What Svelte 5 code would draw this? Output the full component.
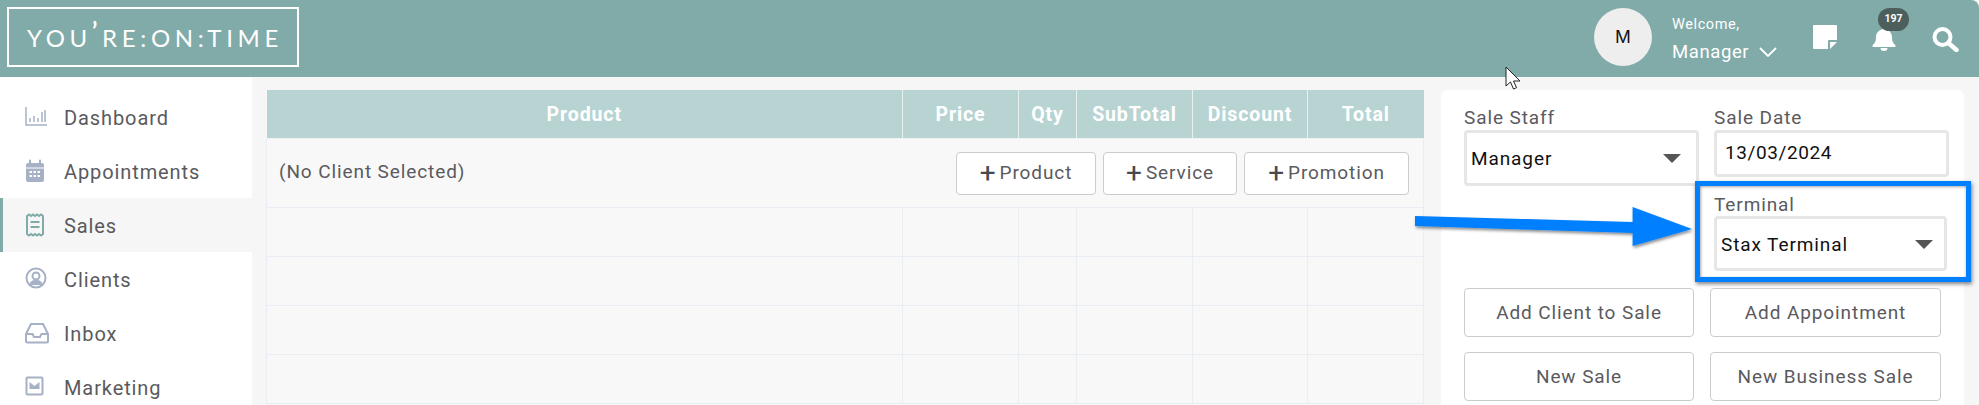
<script>
	const navItems = [
		{ label: 'Dashboard', icon: 'chart' },
		{ label: 'Appointments', icon: 'calendar' },
		{ label: 'Sales', icon: 'receipt', active: true },
		{ label: 'Clients', icon: 'user' },
		{ label: 'Inbox', icon: 'inbox' },
		{ label: 'Marketing', icon: 'mail' }
	];

	const columns = [
		{ label: 'Product', width: 636 },
		{ label: 'Price', width: 116 },
		{ label: 'Qty', width: 58 },
		{ label: 'SubTotal', width: 116 },
		{ label: 'Discount', width: 115 },
		{ label: 'Total', width: 116 }
	];
	const addButtons = [
		{ label: 'Product', width: 140 },
		{ label: 'Service', width: 134 },
		{ label: 'Promotion', width: 165 }
	];
	const actions = ['Add Client to Sale', 'Add Appointment', 'New Sale', 'New Business Sale'];
	const emptyRows = [1, 2, 3, 4];
</script>

<div class="page">
	<header class="topbar">
		<div class="logo"><span>YOU<i>’</i>RE:ON:TIME</span></div>

		<div class="topbar__right">
			<div class="avatar">M</div>
			<div class="welcome">
				<small>Welcome,</small>
				<div class="welcome__name">
					Manager
					<svg width="18" height="10" viewBox="0 0 18 10" fill="none" stroke="#fff" stroke-width="1.8"><path d="M1 1l8 8 8-8" /></svg>
				</div>
			</div>
			<svg class="note" width="24" height="24" viewBox="0 0 24 24"><path fill="#fff" d="M1 0h22a1 1 0 0 1 1 1v14h-8a1 1 0 0 0-1 1v8H1a1 1 0 0 1-1-1V1a1 1 0 0 1 1-1z" /><path fill="#fff" d="M17 17h7l-7 7z" /></svg>
			<div class="bell">
				<svg width="24" height="25" viewBox="0 0 24 25" fill="#fff"><path d="M12 1a2 2 0 0 1 2 2v.4c3.600.9 6 3.900 6 7.600 0 5 1.500 6.400 3.300 8.100.6.600.3 1.900-.8 1.900h-21c-1.100 0-1.400-1.300-.8-1.900C2.500 17.400 4 16 4 11c0-3.700 2.400-6.700 6-7.600V3a2 2 0 0 1 2-2z" /><path d="M8.500 22h7a3.500 3 0 0 1-7 0z" /></svg>
				<span class="bell__badge">197</span>
			</div>
			<svg class="search" width="27" height="25" viewBox="0 0 27 25" fill="none" stroke="#fff"><circle cx="10.500" cy="10" r="8" stroke-width="4" /><path d="M16.500 16l8 7" stroke-width="4.500" stroke-linecap="round" /></svg>
		</div>
	</header>

	<div class="content">
		<nav class="sidebar">
			{#each navItems as item}
				<div class="nav-item" class:nav-item--active={item.active}>
					<svg class="nav-item__icon" width="24" height="24" viewBox="0 0 24 24" fill="none" stroke-width="2">
						{#if item.icon === 'chart'}
							<path d="M1 2v18h21" stroke-width="1.500" />
							<path d="M5 17v-4M9 17v-6M13 17v-4M17 17V7M20 17V5" stroke-width="1.500" />
						{:else if item.icon === 'calendar'}
							<rect x="1" y="4" width="18" height="19" rx="2" fill="currentColor" stroke="none" />
							<path d="M5 1.500v4M15 1.500v4" stroke-linecap="round" />
							<path d="M1 9h18" stroke="#fff" stroke-width="1" />
							<path d="M4.500 13h11M4.500 17h11" stroke="#fff" stroke-width="2" stroke-dasharray="2.500 1.500" />
						{:else if item.icon === 'receipt'}
							<path d="M2 3l2-1.500 2 1.500 2-1.500 2 1.500 2-1.500 2 1.500 2-1.500 2 1.500v18l-2 1.500-2-1.500-2 1.500-2-1.500-2 1.500-2-1.500-2 1.500-2-1.500z" />
							<path d="M5.500 9h9M5.500 14h9" stroke-width="2.200" />
						{:else if item.icon === 'user'}
							<circle cx="11" cy="11" r="9.500" />
							<circle cx="11" cy="9" r="3.500" />
							<path d="M4.500 18c1-4 3.500-4.500 6.500-4.500s5.500.5 6.500 4.500" fill="currentColor" stroke-width="1" />
						{:else if item.icon === 'inbox'}
							<path d="M1 13L6 3h12l5 10v7a1.500 1.500 0 0 1-1.500 1.500h-19A1.500 1.500 0 0 1 1 20z" />
							<path d="M1 13h6.500l1.500 3h6l1.500-3H23" />
						{:else}
							<rect x="1.500" y="2.500" width="16" height="17" rx="1" />
							<path d="M4.500 7l5 4 5-4v7h-10z" fill="currentColor" stroke="none" />
						{/if}
					</svg>
					<span>{item.label}</span>
				</div>
			{/each}
		</nav>

		<main class="main">
			<table class="sale-table">
				<colgroup>
					{#each columns as col}
						<col style="width: {col.width}px" />
					{/each}
				</colgroup>
				<thead>
					<tr>
						{#each columns as col}
							<th>{col.label}</th>
						{/each}
					</tr>
				</thead>
				<tbody>
					<tr class="client-row">
						<td colspan="6">
							<div class="client-row__inner">
								<span>(No Client Selected)</span>
								<div class="add-buttons">
									{#each addButtons as item}
										<button class="btn" style="width: {item.width}px"><b>+</b>{item.label}</button>
									{/each}
								</div>
							</div>
						</td>
					</tr>
					{#each emptyRows as row}
						<tr class="empty-row">
							{#each columns as col}
								<td></td>
							{/each}
						</tr>
					{/each}
				</tbody>
			</table>

			<aside class="panel">
				<div class="fields">
					<div class="field-col">
						<label class="field">
							<span>Sale Staff</span>
							<div class="control control--staff">Manager<i class="caret"></i></div>
						</label>
					</div>
					<div class="field-col">
						<label class="field">
							<span>Sale Date</span>
							<div class="control control--date">13/03/2024</div>
						</label>
						<label class="field field--terminal">
							<span>Terminal</span>
							<div class="control control--terminal">Stax Terminal<i class="caret"></i></div>
						</label>
					</div>
				</div>
				<div class="actions">
					{#each actions as label}
						<button class="btn btn--action">{label}</button>
					{/each}
				</div>
			</aside>
		</main>
	</div>

	<!-- annotation painted on top of the screenshot -->
	<div class="callout"></div>
	<svg class="arrow" width="290" height="50" viewBox="0 0 290 50">
		<defs>
			<filter id="arrow-shadow" x="-5%" y="-20%" width="110%" height="150%">
				<feDropShadow dx="1" dy="2" stdDeviation="1.500" flood-color="#000" flood-opacity="0.45" />
			</filter>
		</defs>
		<path fill="#0080ff" filter="url(#arrow-shadow)" d="M5 16l217.600 6V7L282 29l-59.400 17V33L5 26z" />
	</svg>
	<svg class="pointer" width="20" height="26" viewBox="0 0 20 26">
		<path fill="#fff" stroke="#222" stroke-width="1" d="M1 1v19l4.500-4 3 7 3-1.300-3-6.700h6.500z" />
	</svg>
</div>

<style>
	:global(body) {
		margin: 0;
		background: #f6f6f6;
	}

	.page {
		position: relative;
		width: 1979px;
		height: 405px;
		overflow: hidden;
		font-family: Roboto, "Liberation Sans", sans-serif;
		letter-spacing: 0.9px;
		color: #5a5a5e;
	}

	.topbar {
		height: 77px;
		background: #81aba9;
		display: flex;
		align-items: flex-start;
		justify-content: space-between;
		box-sizing: border-box;
		padding-top: 7px;
		padding-left: 7px;
		border-top-right-radius: 8px;
	}

	.logo {
		width: 292px;
		height: 60px;
		box-sizing: border-box;
		border: 2.500px solid #fff;
		display: flex;
		align-items: center;
		justify-content: center;
		color: #fff;
		font-family: Lato, sans-serif;
		font-weight: 400;
		font-size: 24px;
		letter-spacing: 4.700px;
		padding-left: 4px;
		white-space: nowrap;
	}

	.logo i {
		font-style: normal;
		font-weight: 700;
		position: relative;
		top: -7px;
	}

	.topbar__right {
		display: flex;
		align-items: flex-start;
		color: #fff;
		position: relative;
		width: 385px;
		letter-spacing: 0.6px;
	}

	.avatar {
		width: 58px;
		height: 58px;
		margin-top: 1px;
		border-radius: 50%;
		background: #eeeeee;
		color: #111;
		font-family: "Liberation Sans", sans-serif;
		font-size: 19px;
		letter-spacing: 0;
		display: flex;
		align-items: center;
		justify-content: center;
		flex: none;
	}

	.welcome {
		margin-left: 20px;
		padding-top: 9px;
		width: 141px;
		flex: none;
	}

	.welcome small {
		display: block;
		font-size: 14.500px;
		line-height: 18px;
	}

	.welcome__name {
		display: flex;
		align-items: center;
		gap: 10px;
		margin-top: 7px;
		font-size: 18.500px;
		line-height: 22px;
	}

	.note {
		margin-top: 18px;
		flex: none;
	}

	.bell {
		position: relative;
		margin-left: 35px;
		margin-top: 19px;
		flex: none;
		width: 24px;
		height: 25px;
	}

	.bell__badge {
		position: absolute;
		left: 6px;
		top: -18px;
		width: 31px;
		height: 23px;
		border-radius: 12px;
		background: #4c5f5d;
		color: #fff;
		font-size: 10.500px;
		font-weight: 700;
		letter-spacing: 0;
		text-align: center;
		line-height: 22px;
	}

	.search {
		margin-left: 36px;
		margin-top: 20px;
		flex: none;
	}

	.content {
		display: flex;
		height: 328px;
	}

	.sidebar {
		width: 252px;
		flex: none;
		background: #fff;
		padding-top: 13px;
		box-sizing: border-box;
	}

	.nav-item {
		height: 54px;
		display: flex;
		align-items: center;
		box-sizing: border-box;
		padding-left: 25px;
		font-size: 20px;
		color: #5a5a5e;
	}

	.nav-item > span {
		position: relative;
		top: 1px;
	}

	.nav-item__icon {
		color: #a6b1c6;
		stroke: #a6b1c6;
		margin-right: 15px;
		flex: none;
	}

	.nav-item--active {
		background: #f6f6f6;
		border-left: 3px solid #81aba9;
		padding-left: 22px;
	}

	.nav-item--active .nav-item__icon {
		color: #81aba9;
		stroke: #81aba9;
	}

	.main {
		flex: 1;
		display: flex;
		align-items: flex-start;
		gap: 17px;
		padding: 13px 15px 0 14px;
		min-width: 0;
	}

	.sale-table {
		width: 1157px;
		flex: none;
		border-collapse: collapse;
		table-layout: fixed;
		background: #f8f8f8;
	}

	.sale-table th {
		height: 48px;
		padding: 0;
		background: #b7d4d3;
		color: #fff;
		font-size: 19.500px;
		font-weight: 700;
		border-left: 1px solid #e6f0ef;
		border-bottom: 1px solid #eef2f5;
	}

	.sale-table th:first-child {
		border-left: 0;
	}

	.client-row td {
		height: 68px;
		padding: 0;
		border: 1px solid #e9eef5;
		border-top: 0;
	}

	.client-row__inner {
		display: flex;
		align-items: center;
		justify-content: space-between;
		padding: 0 14px 0 12px;
		font-size: 19px;
	}

	.client-row__inner > span {
		position: relative;
		top: -2px;
	}

	.add-buttons {
		display: flex;
		gap: 7px;
	}

	.btn {
		height: 43px;
		padding: 0 0 1px;
		box-sizing: border-box;
		background: #fff;
		border: 1px solid #cccccc;
		border-radius: 4px;
		font-family: inherit;
		font-size: 19px;
		letter-spacing: 0.9px;
		color: #5a5a5e;
		display: flex;
		align-items: center;
		justify-content: center;
		white-space: nowrap;
	}

	.btn b {
		font-weight: 400;
		font-size: 28px;
		line-height: 1;
		margin-right: 4px;
		letter-spacing: 0;
		color: #4a4a4e;
	}

	.empty-row td {
		height: 48px;
		padding: 0;
		border: 1px solid #e9eef5;
	}

	.panel {
		width: 523px;
		flex: none;
		height: 340px;
		box-sizing: border-box;
		background: #fff;
		border-radius: 6px;
		padding: 17px 22px 0 23px;
	}

	.fields {
		display: grid;
		grid-template-columns: 235px 235px;
		gap: 15px;
		height: 181px;
	}

	.field {
		display: block;
		font-size: 19px;
	}

	.field > span {
		display: block;
		height: 23px;
		line-height: 22px;
	}

	.field--terminal {
		margin-top: 16px;
	}

	.field--terminal > span {
		position: relative;
		top: 1px;
	}

	.control {
		box-sizing: border-box;
		border: 3px solid #e6e6e6;
		border-radius: 4px;
		background: #fff;
		color: #111;
		display: flex;
		align-items: center;
		justify-content: space-between;
		font-size: 19px;
	}

	.control--staff {
		height: 56px;
		padding: 0 15px 0 4px;
	}

	.control--date {
		height: 47px;
		padding: 0 0 2px 8px;
		letter-spacing: 0.6px;
	}

	.control--terminal {
		height: 55px;
		width: 233px;
		padding: 1px 11px 0 4px;
	}

	.caret {
		width: 0;
		height: 0;
		border-left: 9px solid transparent;
		border-right: 9px solid transparent;
		border-top: 9px solid #555;
	}

	.actions {
		display: grid;
		grid-template-columns: 230px 231px;
		column-gap: 16px;
		row-gap: 15px;
	}

	.btn--action {
		height: 49px;
		padding: 0;
	}

	.callout {
		position: absolute;
		left: 1695px;
		top: 181px;
		width: 276px;
		height: 101px;
		box-sizing: border-box;
		border: 5px solid #0080ff;
		box-shadow: 1px 2px 4px rgba(0, 0, 0, 0.5), inset 1px 1px 3px rgba(0, 0, 0, 0.35);
	}

	.arrow {
		position: absolute;
		left: 1410px;
		top: 200px;
	}

	.pointer {
		position: absolute;
		left: 1505px;
		top: 66px;
	}
</style>
